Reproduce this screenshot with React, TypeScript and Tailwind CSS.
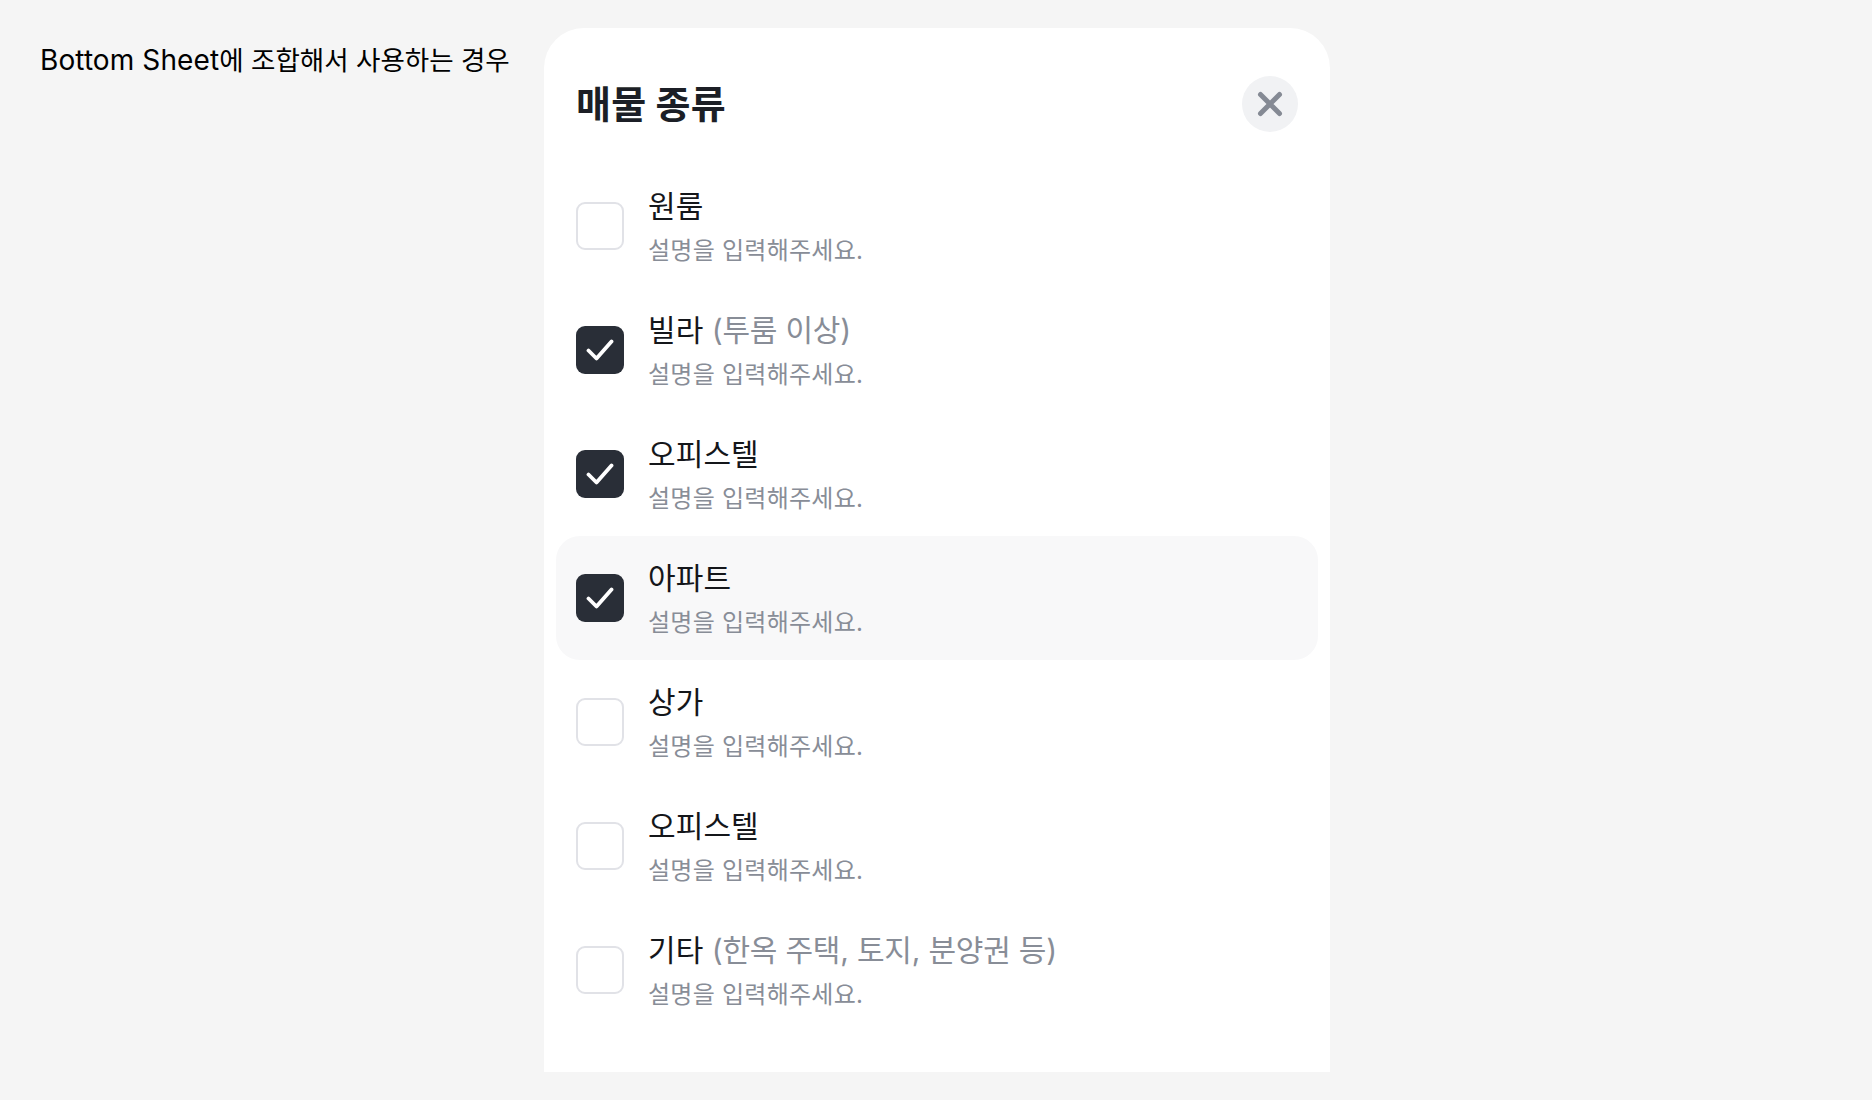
const font = "font-['Inter','Noto_Sans_CJK_KR',sans-serif]";

type Row = { label: string; note?: string; checked?: boolean; active?: boolean };

const rows: Row[] = [
  { label: "원룸" },
  { label: "빌라", note: "(투룸 이상)", checked: true },
  { label: "오피스텔", checked: true },
  { label: "아파트", checked: true, active: true },
  { label: "상가" },
  { label: "오피스텔" },
  { label: "기타", note: "(한옥 주택, 토지, 분양권 등)" },
];

function Check({ checked }: { checked?: boolean }) {
  if (!checked) {
    return <div className="w-12 h-12 shrink-0 rounded-[9px] border-2 border-[#e1e2e7] bg-white" />;
  }
  return (
    <div className="w-12 h-12 shrink-0 rounded-[9px] bg-[#292e37] flex items-center justify-center">
      <svg width="28" height="24" viewBox="0 0 28 24" fill="none">
        <path d="M2.5 12.5 L10.5 20.5 L25.5 3.5" stroke="#fff" strokeWidth="3.8" strokeLinecap="round" strokeLinejoin="round" />
      </svg>
    </div>
  );
}

export default function App() {
  return (
    <div className={`${font} flex items-start min-h-[1100px] bg-[#f5f5f5] pt-7 pl-10`}>
      <div className="w-[504px] pt-[15px] text-[26.5px] leading-[34px] text-black">
        <span className="text-[28px] tracking-[0.1px]">Bottom Sheet</span>에 조합해서 사용하는 경우
      </div>
      <div className="w-[786px] h-[1044px] bg-white rounded-t-[40px] pt-12 px-3">
        <div className="h-14 flex items-center justify-between px-5 mb-8">
          <h2 className="text-[38px] font-bold tracking-[0.2px] text-[#1c1f26]">매물 종류</h2>
          <button className="w-14 h-14 rounded-full bg-[#f1f2f4] flex items-center justify-center">
            <svg width="26" height="26" viewBox="0 0 26 26" fill="none">
              <path d="M3.5 3.5 L22.5 22.5 M22.5 3.5 L3.5 22.5" stroke="#858a94" strokeWidth="5" strokeLinecap="round" />
            </svg>
          </button>
        </div>
        <div className="flex flex-col">
          {rows.map((r, i) => (
            <div key={i} className={`h-[124px] flex items-center gap-6 px-5 rounded-[24px] ${r.active ? "bg-[#f8f8f9]" : ""}`}>
              <Check checked={r.checked} />
              <div className="flex flex-col">
                <div className="text-[30px] leading-[42px] tracking-[0.1px] text-[#14161a]">
                  {r.label}
                  {r.note && <span className="text-[#888d97] tracking-[-0.2px]"> {r.note}</span>}
                </div>
                <div className="mt-[7px] text-[24px] leading-[34px] tracking-[0.25px] text-[#888d97]">설명을 입력해주세요.</div>
              </div>
            </div>
          ))}
        </div>
      </div>
    </div>
  );
}
